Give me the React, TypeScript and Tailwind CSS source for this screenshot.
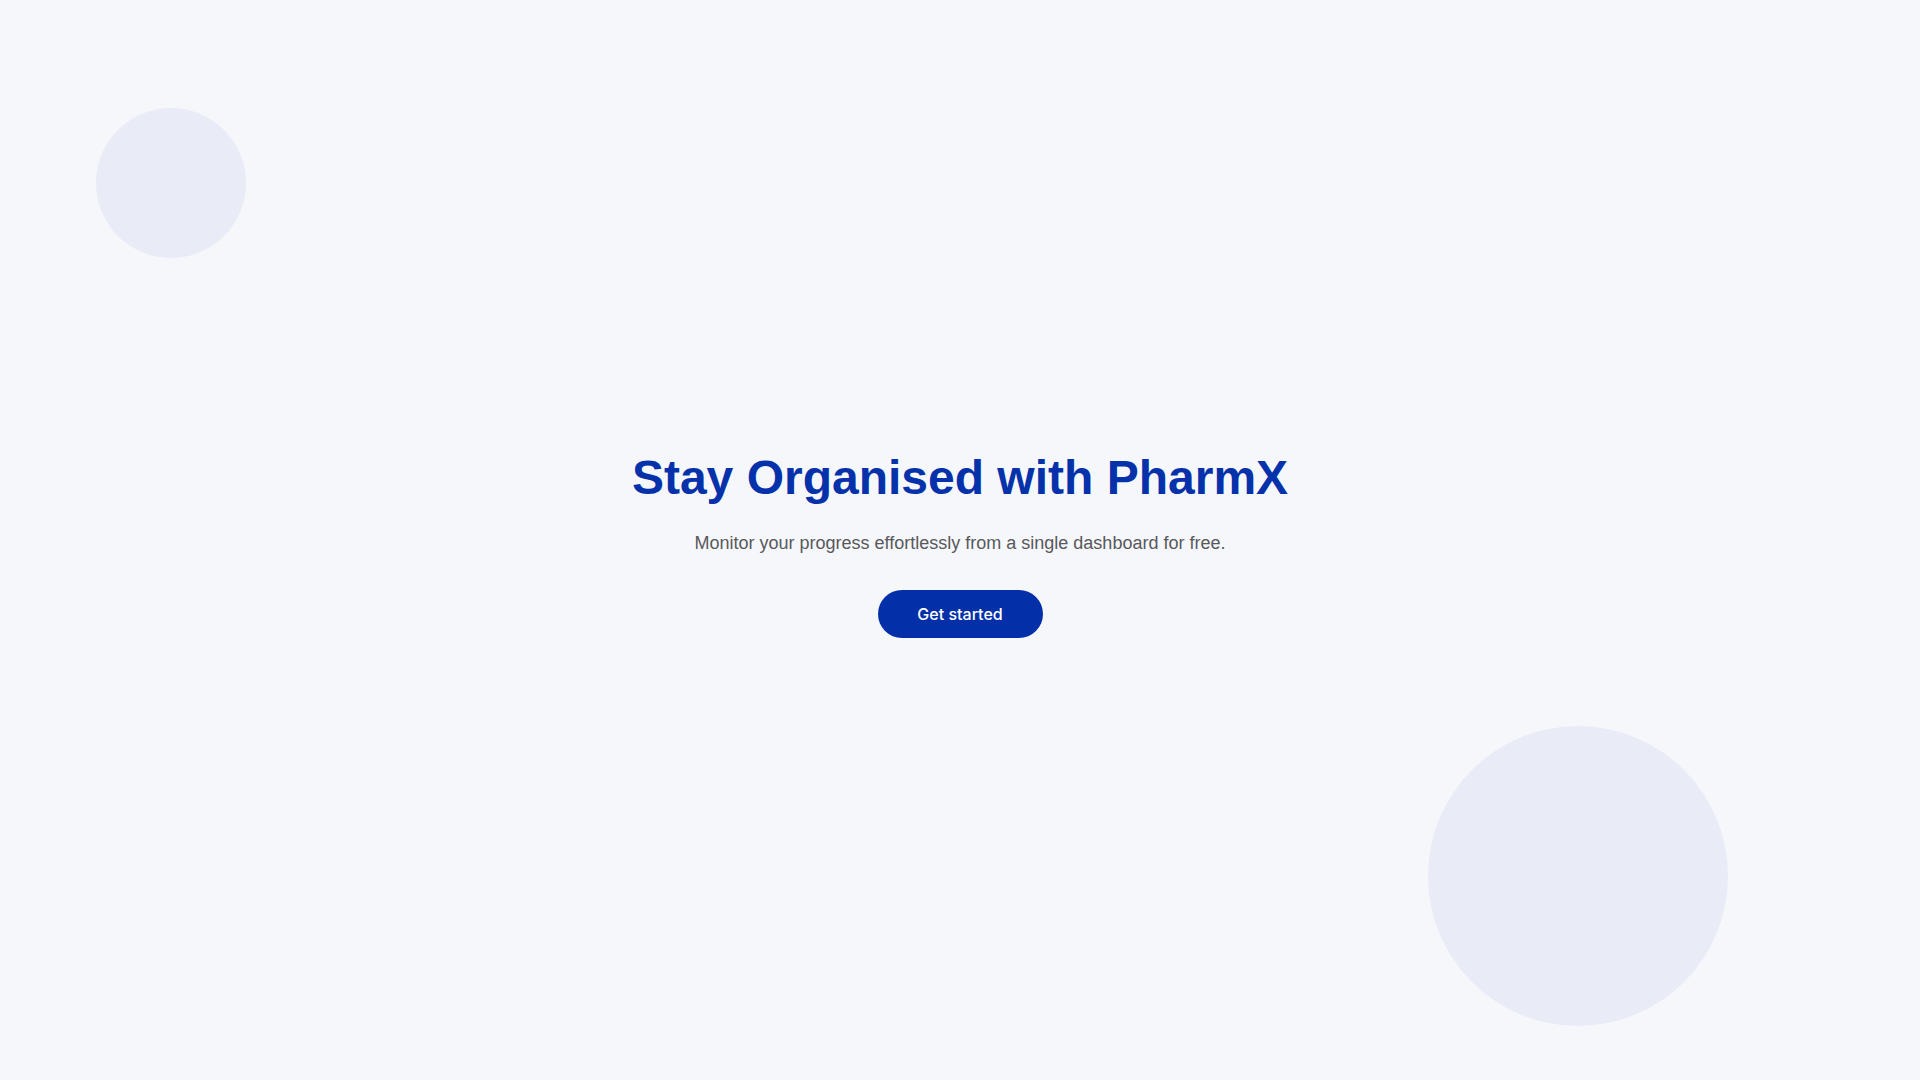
import React from 'react';

export default function App() {
  return (
    <div className="relative min-h-screen w-full overflow-hidden bg-[#f6f7fb] flex items-center justify-center pt-[12px] font-['Liberation_Sans',Arial,sans-serif]">
      <div className="absolute left-[96px] top-[108px] w-[150px] h-[150px] rounded-full bg-[#e9ebf6]" />
      <div className="absolute left-[1428px] top-[726px] w-[300px] h-[300px] rounded-full bg-[#e9ebf6]" />

      <div className="relative flex flex-col items-center text-center">
        <h1 className="text-[48px] leading-none font-bold text-[#0532aa]">
          Stay Organised with PharmX
        </h1>
        <p className="mt-[27px] text-[18px] leading-[28px] text-[#58595c]">
          Monitor your progress effortlessly from a single dashboard for free.
        </p>
        <button className="mt-[33px] h-[48px] w-[165px] rounded-full bg-[#0330a8] text-white text-[16px] font-medium font-['Inter',sans-serif]">
          Get started
        </button>
      </div>
    </div>
  );
}
